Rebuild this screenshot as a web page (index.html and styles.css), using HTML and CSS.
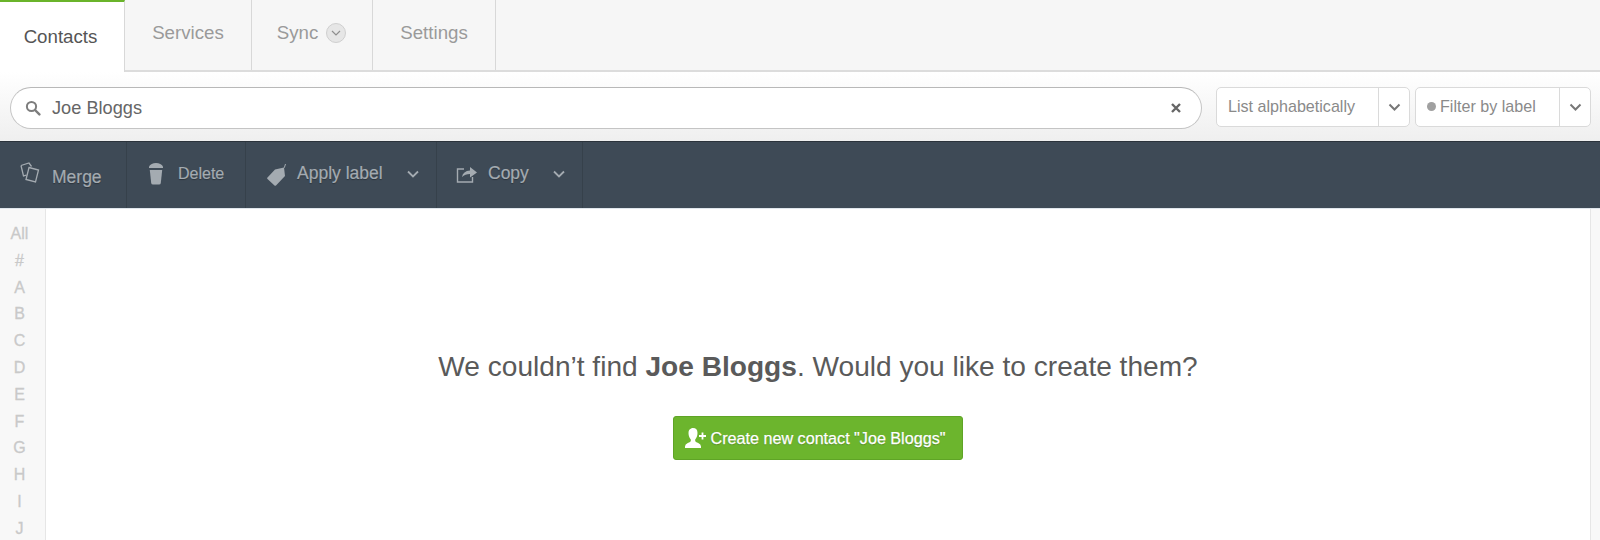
FILE: index.html
```html
<!DOCTYPE html>
<html lang="en">

<head>
    <meta charset="UTF-8">
    <meta name="viewport" content="width=device-width, initial-scale=1.0">
    <title>Contacts</title>
    <link rel="stylesheet" href="styles.css">
</head>

<body>
    <!-- Tabs -->
    <div class="tabs">
        <a href="#" class="tab tab-contacts active">Contacts</a>
        <a href="#" class="tab tab-services">Services</a>
        <a href="#" class="tab tab-sync">Sync
            <span class="sync-arrow">
                <svg width="10" height="6" viewBox="0 0 10 6"><path d="M1 1l4 4 4-4" fill="none" stroke="#8f8f8f" stroke-width="1.2"/></svg>
            </span>
        </a>
        <a href="#" class="tab tab-settings">Settings</a>
    </div>

    <!-- Search row -->
    <div class="search-row">
        <div class="search-box">
            <svg class="search-icon" width="16" height="16" viewBox="0 0 16 16"><circle cx="6.5" cy="6.5" r="4.6" fill="none" stroke="#7d7d7d" stroke-width="2"/><path d="M10 10l4.400 4.400" stroke="#7d7d7d" stroke-width="2.400" stroke-linecap="round"/></svg>
            <span class="search-text">Joe Bloggs</span>
            <svg class="clear-icon" width="12" height="12" viewBox="0 0 12 12"><path d="M2 2l8 8M10 2l-8 8" stroke="#666" stroke-width="2.400"/></svg>
        </div>
        <div class="select select-sort">
            <span class="select-label">List alphabetically</span>
            <span class="select-arrow"><svg width="13" height="8" viewBox="0 0 13 8"><path d="M1.500 1.500l5 5 5-5" fill="none" stroke="#777" stroke-width="2"/></svg></span>
        </div>
        <div class="select select-filter">
            <span class="select-label"><span class="label-dot"></span>Filter by label</span>
            <span class="select-arrow"><svg width="13" height="8" viewBox="0 0 13 8"><path d="M1.500 1.500l5 5 5-5" fill="none" stroke="#777" stroke-width="2"/></svg></span>
        </div>
    </div>

    <!-- Toolbar -->
    <div class="toolbar">
        <div class="tool tool-merge">
            <svg width="24" height="24" viewBox="0 0 24 24" fill="none" stroke="#a4abb1" stroke-width="1.300"><path d="M2 3.500l8-2.500 2.500 3.500"/><path d="M2 3.500l2.500 10.500 3-.8"/><path d="M10 5.500l9.500 2.500-3 12-9.500-2.500z"/></svg>
            <span class="tool-text">Merge</span>
        </div>
        <div class="tool tool-delete">
            <svg width="18" height="24" viewBox="0 0 18 24" fill="#a4abb1"><path d="M9 1q5 0 7 3.500v1.500H2V4.500Q4 1 9 1z"/><path d="M2.800 8h12.400l-1.400 13q-.2 1.500-1.800 1.500H6q-1.600 0-1.800-1.500z"/></svg>
            <span class="tool-text">Delete</span>
        </div>
        <div class="tool tool-label">
            <svg width="24" height="24" viewBox="0 0 24 24" fill="#a4abb1"><path d="M10 7.500l9-2 1 8.500-9 9.500q-.8.700-1.500 0l-7-6.500q-.7-.8 0-1.500z"/><path d="M17 8q3-2 3.500-6" fill="none" stroke="#a4abb1" stroke-width="1"/></svg>
            <span class="tool-text">Apply label</span>
            <svg class="tool-arrow" width="12" height="8" viewBox="0 0 12 8"><path d="M1 1.500l5 5 5-5" fill="none" stroke="#a4abb1" stroke-width="1.800"/></svg>
        </div>
        <div class="tool tool-copy">
            <svg width="22" height="20" viewBox="0 0 22 20" fill="none" stroke="#a4abb1" stroke-width="1.400"><path d="M8 5H1.500v13h15v-5"/><path d="M6 13q1-6 8-6.500V3l7 5.500-7 5v-3.500q-5 0-8 3z" fill="#a4abb1" stroke="none"/></svg>
            <span class="tool-text">Copy</span>
            <svg class="tool-arrow" width="12" height="8" viewBox="0 0 12 8"><path d="M1 1.500l5 5 5-5" fill="none" stroke="#a4abb1" stroke-width="1.800"/></svg>
        </div>
    </div>

    <!-- Main area -->
    <div class="content">
        <ul class="alpha-list">
            <li>All</li>
            <li>#</li>
            <li>A</li>
            <li>B</li>
            <li>C</li>
            <li>D</li>
            <li>E</li>
            <li>F</li>
            <li>G</li>
            <li>H</li>
            <li>I</li>
            <li>J</li>
        </ul>
        <div class="empty-state">
            <h2>We couldn’t find <strong>Joe Bloggs</strong>. Would you like to create them?</h2>
            <button class="create-btn">
                <svg width="23" height="22" viewBox="0 0 23 22" fill="#fff"><path d="M9 1q4.500 0 4.500 5c0 3-1 5-2.300 6.500v1.500q0 1 3 2 2.800 1 2.800 3.500V21H1v-1.500q0-2.500 2.800-3.500 3-1 3-2v-1.500C5.500 11 4.500 9 4.500 6 4.500 1 9 1 9 1z"/><path d="M18.500 5.500v7M15 9h7" stroke="#fff" stroke-width="1.800" fill="none"/></svg>
                <span>Create new contact "Joe Bloggs"</span>
            </button>
        </div>
        <div class="right-strip"></div>
    </div>
</body>

</html>
```

FILE: styles.css
```css
html,
body {
    height: 100%;
}

body {
    font-family: "Liberation Sans", Arial, sans-serif;
    margin: 0;
    padding: 0;
    background-color: white;
    color: #555;
    display: flex;
    flex-direction: column;
    overflow: hidden;
}

/* Tabs */
.tabs {
    display: flex;
    height: 70px;
    background-color: #f6f6f6;
    border-bottom: 2px solid #dcdcdc;
    flex-shrink: 0;
}

.tab {
    display: flex;
    align-items: center;
    justify-content: center;
    gap: 8px;
    box-sizing: border-box;
    height: 70px;
    padding-bottom: 4px;
    border-right: 1px solid #d8d8d8;
    color: #9a9a9a;
    font-size: 18.700px;
    text-decoration: none;
}

.tab-contacts {
    width: 125px;
    padding-right: 3px;
}

.tab-services {
    width: 127px;
}

.tab-sync {
    width: 121px;
    padding-right: 1px;
}

.tab-settings {
    width: 123px;
}

.tab.active {
    height: 72px;
    margin-bottom: -2px;
    padding-bottom: 0;
    background-color: white;
    border-top: 2px solid #6ab42a;
    color: #555;
}

.sync-arrow {
    display: flex;
    align-items: center;
    justify-content: center;
    width: 20px;
    height: 20px;
    box-sizing: border-box;
    border: 1px solid #cfcfcf;
    border-radius: 50%;
    background-color: #e6e6e6;
}

/* Search row */
.search-row {
    display: flex;
    align-items: flex-start;
    height: 69px;
    box-sizing: border-box;
    padding: 15px 9px 0 10px;
    background: linear-gradient(#ffffff, #efefef);
    flex-shrink: 0;
}

.search-box {
    display: flex;
    align-items: center;
    flex: 1;
    height: 42px;
    box-sizing: border-box;
    padding: 0 19px 0 14px;
    background-color: white;
    border: 1px solid #c4c4c4;
    border-top-color: #b8b8b8;
    border-radius: 21px;
    margin-right: 14px;
}

.search-icon {
    flex-shrink: 0;
}

.search-text {
    flex: 1;
    margin-left: 11px;
    padding-top: 1px;
    font-size: 18.200px;
    color: #666;
}

.select {
    display: flex;
    height: 40px;
    box-sizing: border-box;
    background-color: white;
    border: 1px solid #dadada;
    border-radius: 5px;
    font-size: 16.100px;
    color: #8a8a8a;
}

.select-sort {
    width: 194px;
    margin-right: 5px;
}

.select-filter {
    width: 176px;
}

.select-label {
    flex: 1;
    display: flex;
    align-items: center;
    padding-left: 11px;
    padding-bottom: 1px;
}

.select-arrow {
    display: flex;
    align-items: center;
    justify-content: center;
    width: 30px;
    border-left: 1px solid #dadada;
}

.label-dot {
    width: 9px;
    height: 9px;
    margin-right: 4px;
    border-radius: 50%;
    background-color: #a0a0a0;
}

/* Toolbar */
.toolbar {
    display: flex;
    height: 68px;
    box-sizing: border-box;
    background-color: #3e4a56;
    border-top: 1px solid #2b333b;
    border-bottom: 1px solid #dfe6ec;
    flex-shrink: 0;
}

.tool {
    display: flex;
    align-items: center;
    box-sizing: border-box;
    height: 66px;
    padding-bottom: 3px;
    border-right: 1px solid #36414b;
    color: #a4abb1;
    font-size: 17.500px;
}

.tool-text {
    -webkit-text-stroke: 0.200px #a4abb1;
    text-shadow: 0 1px 1px rgba(0, 0, 0, 0.3);
}

.tool-merge {
    width: 127px;
    padding-left: 19px;
    gap: 9px;
}

.tool-merge .tool-text {
    margin-top: 7px;
}

.tool-delete {
    width: 119px;
    padding-left: 20px;
    gap: 13px;
    font-size: 16px;
}

.tool-label {
    width: 191px;
    padding-left: 19px;
    gap: 8px;
}

.tool-copy {
    width: 146px;
    padding-left: 19px;
    gap: 10px;
}

.tool-arrow {
    margin-left: auto;
    margin-right: 17px;
}

/* Main area */
.content {
    flex: 1;
    display: flex;
    min-height: 0;
}

.alpha-list {
    list-style-type: none;
    width: 46px;
    box-sizing: border-box;
    margin: 0;
    padding: 12px 6px 0 0;
    background-color: #f8f8f8;
    border-right: 1px solid #e6e6e6;
    text-align: center;
    color: #c9c9c9;
    font-size: 16px;
    -webkit-text-stroke: 0.300px #c9c9c9;
    flex-shrink: 0;
}

.alpha-list li {
    height: 26.800px;
    line-height: 26.800px;
}

.empty-state {
    flex: 1;
    display: flex;
    flex-direction: column;
    align-items: center;
    padding-top: 140px;
}

.empty-state h2 {
    margin: 0;
    font-size: 28.100px;
    line-height: 36px;
    font-weight: normal;
    color: #5a5a5a;
}

.create-btn {
    display: flex;
    align-items: center;
    gap: 4px;
    height: 44px;
    width: 290px;
    box-sizing: border-box;
    justify-content: center;
    margin-top: 31px;
    padding: 0 7px 0 0;
    background-color: #6cb52d;
    border: 1px solid #5fa426;
    border-radius: 3px;
    color: white;
    font-family: inherit;
    font-size: 16.150px;
    -webkit-text-stroke: 0.250px white;
    text-shadow: 0 1px 1px rgba(0, 0, 0, 0.25);
    cursor: pointer;
}

.right-strip {
    width: 10px;
    box-sizing: border-box;
    background-color: #f8f8f8;
    border-left: 1px solid #e6e6e6;
    flex-shrink: 0;
}
```
